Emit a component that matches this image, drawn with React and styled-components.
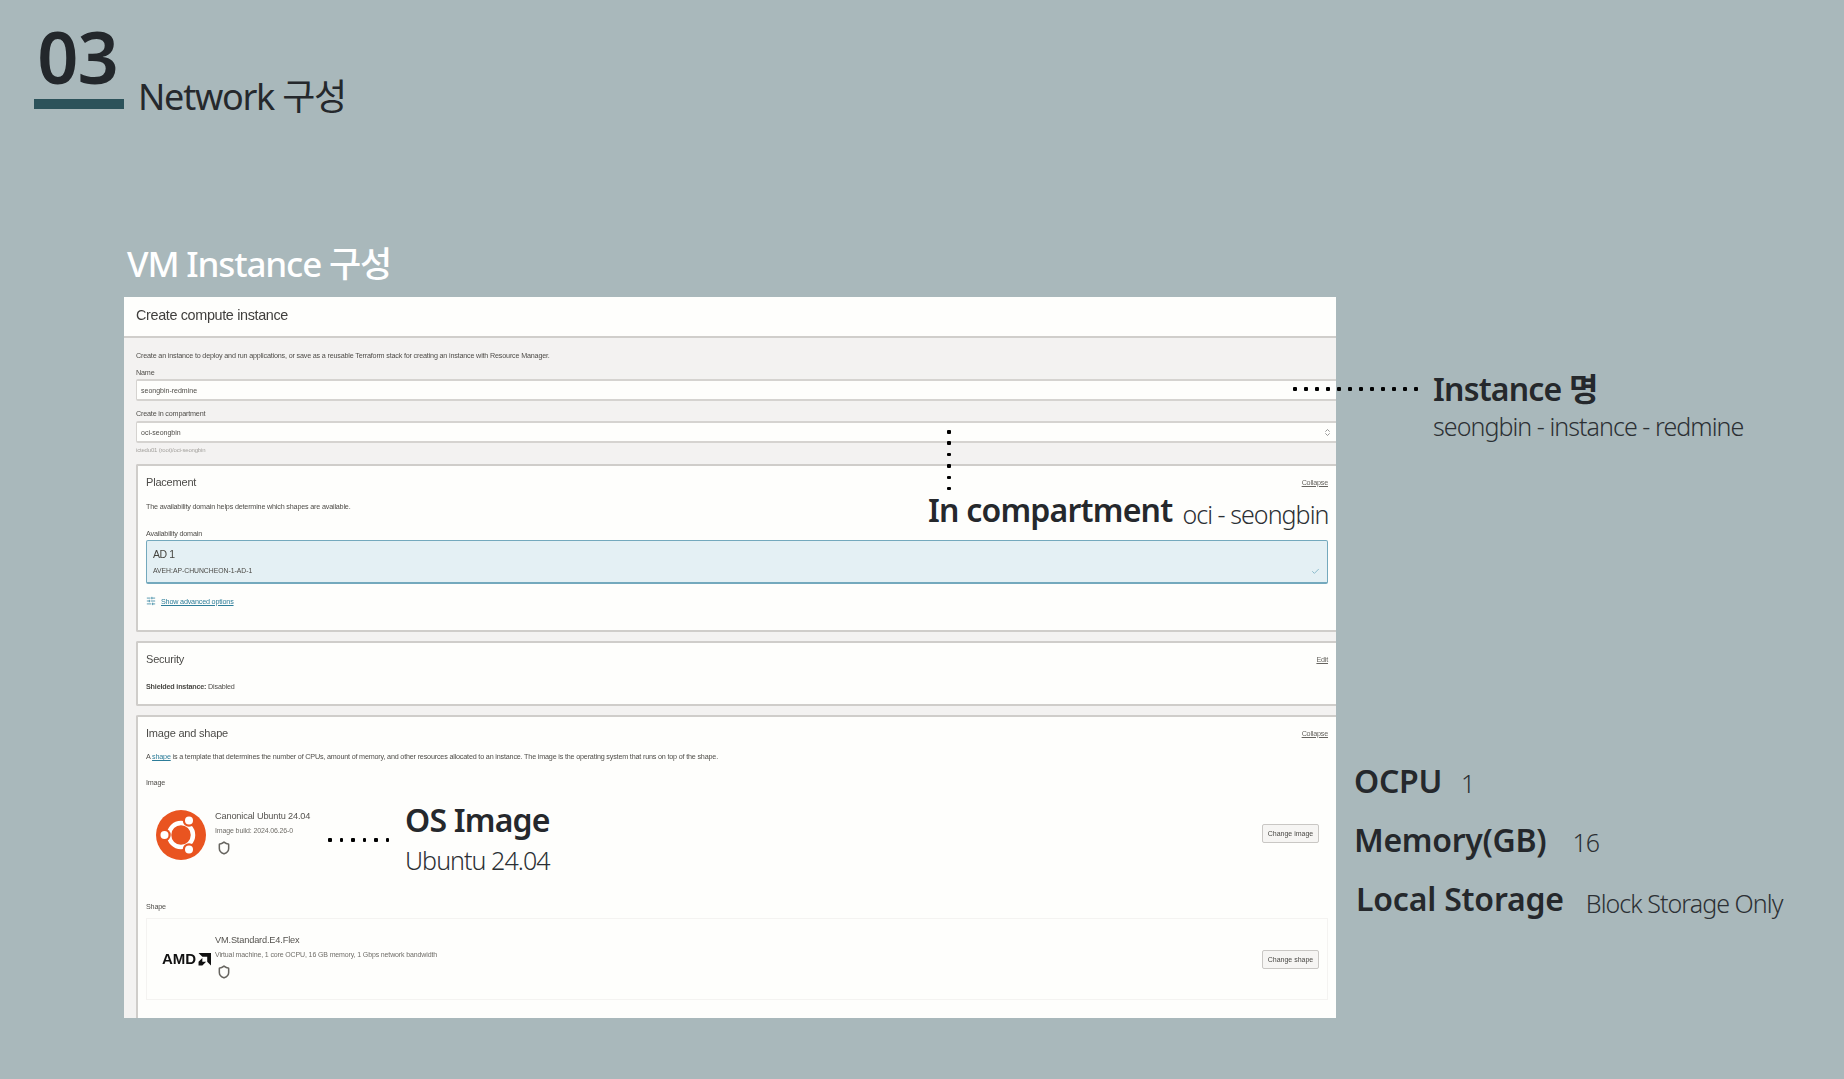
import React from "react";
import styled, { createGlobalStyle } from "styled-components";
import { Check, ChevronsUpDown, Shield, SlidersHorizontal } from "lucide-react";

const Global = createGlobalStyle`
  html, body { margin: 0; padding: 0; background: #a9b8bb; }
  * { box-sizing: border-box; }
`;

const slideFont = `"Noto Sans", "Noto Sans CJK KR", sans-serif`;
const uiFont = `"Liberation Sans", Arial, sans-serif`;

const Page = styled.div`
  width: 1844px;
  height: 1079px;
  background: #a9b8bb;
  overflow: hidden;
  font-family: ${slideFont};
  color: #25282c;
`;

const Header = styled.header`
  display: flex;
  align-items: flex-end;
  padding: 12px 0 0 34px;
  height: 108.5px;
`;

const NumberBlock = styled.div`
  width: 90px;
  display: flex;
  flex-direction: column;
  align-items: center;
`;

const SectionNumber = styled.div`
  font-size: 72px;
  font-weight: 600;
  line-height: 80px;
  letter-spacing: -1px;
  margin-left: -3px;
  color: #23272b;
`;

const Bar = styled.div`
  width: 90px;
  height: 10px;
  margin-top: 3px;
  background: #2c525a;
`;

const SectionTitle = styled.h1`
  margin: 0 0 -10px 14px;
  font-size: 36px;
  font-weight: 400;
  line-height: 44px;
  letter-spacing: -1.25px;
  color: #25282c;
`;

const Main = styled.main`
  padding: 131.5px 0 0 124px;
`;

const PanelTitle = styled.h2`
  margin: 0 0 9px 3px;
  font-size: 35px;
  font-weight: 500;
  line-height: 48px;
  letter-spacing: -1.15px;
  color: #fff;
`;

const Row = styled.div`
  display: flex;
  align-items: flex-start;
`;

const Stage = styled.div`
  position: relative;
  width: 1212px;
  height: 721px;
  flex: none;
`;

const Panel = styled.section`
  width: 100%;
  height: 100%;
  overflow: hidden;
  background: #f3f2f1;
  font-family: ${uiFont};
  color: #3a3936;
  filter: blur(0.45px);
`;

const PanelHeader = styled.div`
  height: 41px;
  padding: 9px 12px 0;
  background: #fefefc;
  border-bottom: 2px solid #d0cecb;
  font-size: 14.4px;
  line-height: 18px;
  letter-spacing: -0.35px;
  color: #403f3d;
`;

const PanelBody = styled.div`
  padding: 13px 0 0 12px;
`;

const Micro = styled.div`
  font-size: ${(p) => p.$size || 7.2}px;
  line-height: 10px;
  letter-spacing: -0.18px;
  color: ${(p) => p.$color || "#4f4d49"};
  margin-top: ${(p) => p.$top || 0}px;
`;

const Field = styled.div`
  height: 22px;
  margin-top: ${(p) => p.$top}px;
  padding: 0 4px;
  display: flex;
  align-items: center;
  justify-content: space-between;
  background: #fefefc;
  border: 1px solid #d5d3d0;
  border-width: 2px 0 2px 1px;
  border-radius: 2px 0 0 2px;
  font-size: 7px;
  color: #4f4d49;
`;

const Card = styled.div`
  height: ${(p) => p.$height}px;
  margin-top: ${(p) => p.$top}px;
  padding: 8px 8px 0 8px;
  background: #fefefc;
  border: 2px solid #cfcdca;
  border-right: 0;
  border-bottom-width: ${(p) => (p.$open ? 0 : 2)}px;
  border-radius: 2px 0 0 2px;
`;

const CardHead = styled.div`
  display: flex;
  align-items: center;
  justify-content: space-between;
  height: 16px;
`;

const CardTitle = styled.div`
  font-size: 11px;
  letter-spacing: -0.2px;
  color: #4c4b48;
`;

const CardAction = styled.span`
  font-size: 7.2px;
  letter-spacing: -0.2px;
  text-decoration: underline;
  color: #66645f;
`;

const Link = styled.span`
  color: #2d7d99;
  text-decoration: underline;
`;

const DomainBox = styled.div`
  height: 44px;
  margin-top: 1px;
  padding: 6px 7px 0 6px;
  background: #e4f0f4;
  border: 1px solid #74a9bd;
  border-bottom-width: 2px;
  border-radius: 2px;
`;

const DomainName = styled.div`
  font-size: 10.5px;
  line-height: 14px;
  letter-spacing: -0.4px;
  color: #45443f;
`;

const DomainMeta = styled.div`
  display: flex;
  align-items: center;
  justify-content: space-between;
  margin-top: 4px;
  font-size: 6.8px;
  line-height: 12px;
  color: #4a4945;
`;

const AdvancedRow = styled.div`
  display: flex;
  align-items: center;
  gap: 5px;
  margin-top: 12px;
  font-size: 7.2px;
  letter-spacing: -0.18px;
`;

const Strong = styled.b`
  color: #4a4945;
`;

const ChoiceRow = styled.div`
  display: flex;
  align-items: center;
  height: ${(p) => p.$height}px;
  margin-top: ${(p) => p.$top || 0}px;
  padding: 0 8px 0 ${(p) => p.$pad}px;
  border: ${(p) => (p.$framed ? "1px solid #f4f3f1" : "1px solid transparent")};
`;

const ChoiceLogo = styled.div`
  width: ${(p) => p.$width}px;
  flex: none;
  display: flex;
  align-items: center;
`;

const ChoiceText = styled.div`
  flex: 1;
  display: flex;
  flex-direction: column;
  margin-bottom: 6px;
`;

const ChoiceName = styled.div`
  font-size: 9.2px;
  line-height: 13px;
  letter-spacing: -0.15px;
  color: #55534f;
`;

const ChoiceMeta = styled.div`
  margin-top: 2px;
  font-size: 7px;
  line-height: 11px;
  letter-spacing: -0.13px;
  color: #706e69;
`;

const ShieldIcon = styled(Shield).attrs({ size: 14, strokeWidth: 2.6 })`
  margin: 5px 0 0 2px;
  color: #66645f;
`;

const ChangeButton = styled.div`
  width: 57px;
  height: 19px;
  margin-bottom: ${(p) => p.$lift || 0}px;
  display: flex;
  align-items: center;
  justify-content: center;
  background: #f6f5f3;
  border: 1px solid #c9c7c4;
  border-radius: 2px;
  font-size: 7px;
  color: #4a4945;
`;

const AmdWord = styled.span`
  font-family: ${uiFont};
  font-size: 15px;
  font-weight: 700;
  line-height: 16px;
  color: #111;
`;

const AmdLogo = styled.div`
  display: flex;
  align-items: center;
  gap: 2px;
`;

const Callout = styled.div`
  position: absolute;
  left: ${(p) => p.$x}px;
  top: ${(p) => p.$y}px;
  display: ${(p) => (p.$inline ? "flex" : "block")};
  align-items: baseline;
  gap: 10px;
  white-space: nowrap;
`;

const CalloutHead = styled.div`
  font-size: 32px;
  font-weight: 600;
  line-height: 1.2;
  letter-spacing: ${(p) => p.$spacing ?? -0.8}px;
  color: #25282c;
`;

const CalloutText = styled.div`
  margin-top: ${(p) => p.$top || 0}px;
  transform: translateY(${(p) => p.$drop || 0}px);
  font-size: 25px;
  font-weight: 300;
  line-height: 1.2;
  letter-spacing: -0.95px;
  color: #2c3034;
`;

const Dots = styled.div`
  position: absolute;
  left: ${(p) => p.$x}px;
  top: ${(p) => p.$y}px;
  display: flex;
  flex-direction: ${(p) => (p.$vertical ? "column" : "row")};
  gap: ${(p) => p.$gap}px;
`;

const Dot = styled.i`
  display: block;
  width: 3.5px;
  height: 3.5px;
  background: #000;
  border-radius: 1px;
`;

const Aside = styled.aside`
  flex: 1;
  padding: 73px 0 0 97px;
`;

const Specs = styled.div`
  margin: 321px 0 0 -79px;
  display: flex;
  flex-direction: column;
  gap: 13px;
`;

const SpecRow = styled.div`
  display: flex;
  align-items: baseline;
  height: ${(p) => p.$height}px;
  padding-left: ${(p) => p.$indent || 0}px;
  gap: ${(p) => p.$gap}px;
`;

function UbuntuLogo() {
  const dots = [
    [66, 21],
    [66, 79],
    [17, 50],
  ];
  return (
    <svg width="50" height="50" viewBox="0 0 100 100" aria-hidden="true">
      <circle cx="50" cy="50" r="50" fill="#e95420" />
      <circle cx="50" cy="50" r="24" fill="none" stroke="#fff" strokeWidth="9" />
      {dots.map(([x, y]) => (
        <g key={x + "-" + y}>
          <circle cx={x} cy={y} r="12.5" fill="#e95420" />
          <circle cx={x} cy={y} r="8" fill="#fff" />
        </g>
      ))}
    </svg>
  );
}

function AmdArrow() {
  return (
    <svg width="13" height="13" viewBox="0 0 24 24" aria-hidden="true">
      <path d="M1 0H24V23L17 16V7H8Z" fill="#111" />
      <path d="M8 9L1 16V23H8L15 16H8Z" fill="#111" />
    </svg>
  );
}

function DotLine({ count, ...rest }) {
  return (
    <Dots {...rest}>
      {Array.from({ length: count }, (_, i) => (
        <Dot key={i} />
      ))}
    </Dots>
  );
}

export default function App() {
  return (
    <Page>
      <Global />
      <Header>
        <NumberBlock>
          <SectionNumber>03</SectionNumber>
          <Bar />
        </NumberBlock>
        <SectionTitle>Network 구성</SectionTitle>
      </Header>
      <Main>
        <PanelTitle>VM Instance 구성</PanelTitle>
        <Row>
          <Stage>
            <Panel>
              <PanelHeader>Create compute instance</PanelHeader>
              <PanelBody>
                <Micro>
                  Create an instance to deploy and run applications, or save as a reusable Terraform stack for creating an instance with Resource Manager.
                </Micro>
                <Micro $top={7}>Name</Micro>
                <Field $top={1}>seongbin-redmine</Field>
                <Micro $top={8}>Create in compartment</Micro>
                <Field $top={2}>
                  oci-seongbin
                  <ChevronsUpDown size={9} color="#777" />
                </Field>
                <Micro $size={6} $color="#a5a39f" $top={2}>
                  ictedu01 (root)/oci-seongbin
                </Micro>
                <Card $height={168} $top={9}>
                  <CardHead>
                    <CardTitle>Placement</CardTitle>
                    <CardAction>Collapse</CardAction>
                  </CardHead>
                  <Micro $top={12}>The availability domain helps determine which shapes are available.</Micro>
                  <Micro $top={17}>Availability domain</Micro>
                  <DomainBox>
                    <DomainName>AD 1</DomainName>
                    <DomainMeta>
                      AVEH:AP-CHUNCHEON-1-AD-1
                      <Check size={9} color="#6fa9bd" />
                    </DomainMeta>
                  </DomainBox>
                  <AdvancedRow>
                    <SlidersHorizontal size={10} color="#3f8aa5" />
                    <Link>Show advanced options</Link>
                  </AdvancedRow>
                </Card>
                <Card $height={65} $top={9}>
                  <CardHead>
                    <CardTitle>Security</CardTitle>
                    <CardAction>Edit</CardAction>
                  </CardHead>
                  <Micro $top={15}>
                    <Strong>Shielded instance:</Strong> Disabled
                  </Micro>
                </Card>
                <Card $height={312} $top={9} $open>
                  <CardHead>
                    <CardTitle>Image and shape</CardTitle>
                    <CardAction>Collapse</CardAction>
                  </CardHead>
                  <Micro $top={11}>
                    A <Link>shape</Link> is a template that determines the number of CPUs, amount of memory, and other resources allocated to an instance. The image is the operating system that runs on top of the shape.
                  </Micro>
                  <Micro $top={16}>Image</Micro>
                  <ChoiceRow $height={88} $top={3} $pad={9}>
                    <ChoiceLogo $width={59}>
                      <UbuntuLogo />
                    </ChoiceLogo>
                    <ChoiceText>
                      <ChoiceName>Canonical Ubuntu 24.04</ChoiceName>
                      <ChoiceMeta>Image build: 2024.06.26-0</ChoiceMeta>
                      <ShieldIcon />
                    </ChoiceText>
                    <ChangeButton $lift={3}>Change image</ChangeButton>
                  </ChoiceRow>
                  <Micro $top={23}>Shape</Micro>
                  <ChoiceRow $height={82} $top={6} $pad={15} $framed>
                    <ChoiceLogo $width={53}>
                      <AmdLogo>
                        <AmdWord>AMD</AmdWord>
                        <AmdArrow />
                      </AmdLogo>
                    </ChoiceLogo>
                    <ChoiceText>
                      <ChoiceName>VM.Standard.E4.Flex</ChoiceName>
                      <ChoiceMeta>Virtual machine, 1 core OCPU, 16 GB memory, 1 Gbps network bandwidth</ChoiceMeta>
                      <ShieldIcon />
                    </ChoiceText>
                    <ChangeButton>Change shape</ChangeButton>
                  </ChoiceRow>
                </Card>
              </PanelBody>
            </Panel>
            <DotLine count={12} $gap={7.5} $x={1169} $y={90} />
            <DotLine count={6} $gap={7.9} $x={823} $y={133} $vertical />
            <DotLine count={6} $gap={8.1} $x={204} $y={541} />
            <Callout $x={804} $y={194} $inline>
              <CalloutHead>In compartment</CalloutHead>
              <CalloutText $drop={2}>oci - seongbin</CalloutText>
            </Callout>
            <Callout $x={281} $y={504}>
              <CalloutHead>OS Image</CalloutHead>
              <CalloutText $top={6}>Ubuntu 24.04</CalloutText>
            </Callout>
          </Stage>
          <Aside>
            <CalloutHead>Instance 명</CalloutHead>
            <CalloutText $top={3}>seongbin - instance - redmine</CalloutText>
            <Specs>
              <SpecRow $height={46} $gap={19}>
                <CalloutHead $spacing={-0.3}>OCPU</CalloutHead>
                <CalloutText>1</CalloutText>
              </SpecRow>
              <SpecRow $height={46} $gap={26}>
                <CalloutHead $spacing={-0.3}>Memory(GB)</CalloutHead>
                <CalloutText>16</CalloutText>
              </SpecRow>
              <SpecRow $height={46} $gap={22} $indent={2}>
                <CalloutHead $spacing={-0.2}>Local Storage</CalloutHead>
                <CalloutText $drop={2}>Block Storage Only</CalloutText>
              </SpecRow>
            </Specs>
          </Aside>
        </Row>
      </Main>
    </Page>
  );
}
